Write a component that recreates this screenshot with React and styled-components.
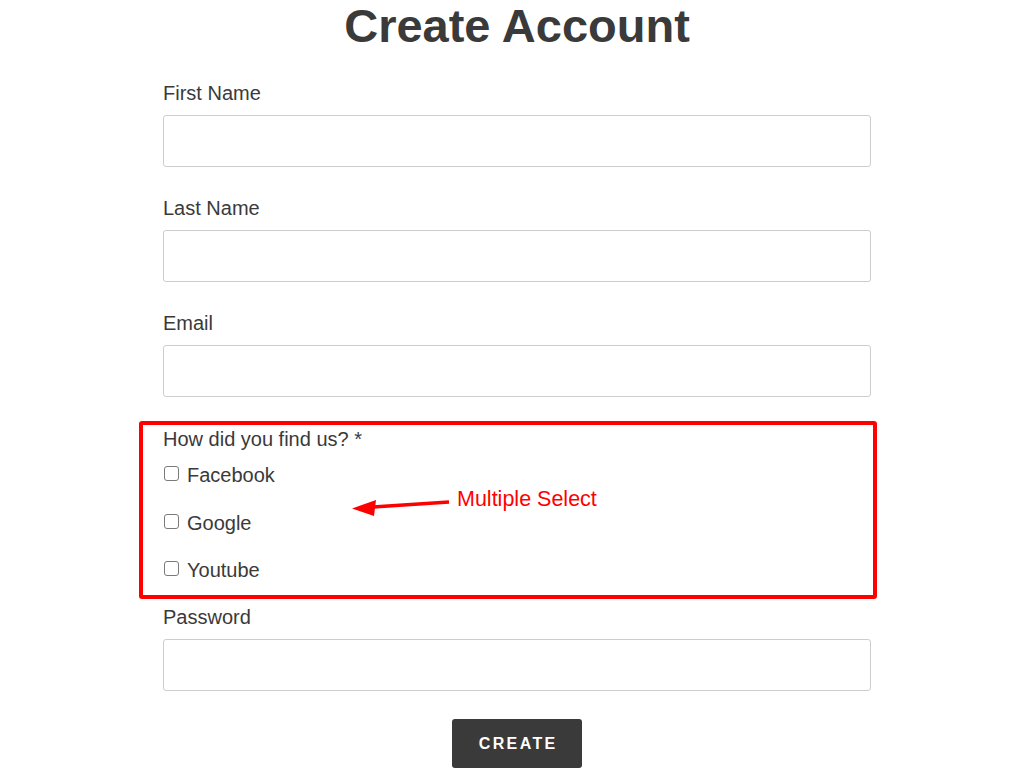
import React from 'react';
import styled, { createGlobalStyle } from 'styled-components';

const GlobalStyle = createGlobalStyle`
  html, body {
    margin: 0;
    padding: 0;
    background: #fff;
  }

  body {
    font-family: "Liberation Sans", Arial, Helvetica, sans-serif;
    color: #3a3a3a;
  }
`;

const Page = styled.div`
  padding-left: 10px;
`;

const Container = styled.form`
  width: 708px;
  margin: 0 auto;
  display: flex;
  flex-direction: column;
`;

const Title = styled.h1`
  margin: 0;
  font-size: 47px;
  line-height: 52px;
  font-weight: 700;
  text-align: center;
  color: #3a3a3a;
`;

const Field = styled.div`
  display: flex;
  flex-direction: column;
  margin-top: ${(p) => p.$top || 30}px;
`;

const Label = styled.label`
  display: block;
  font-size: 20px;
  line-height: 22px;
  color: #3a3a3a;
  margin-bottom: 11px;
`;

const Input = styled.input`
  box-sizing: border-box;
  width: 100%;
  height: 52px;
  border: 1px solid #cdcdcd;
  border-radius: 3px;
  padding: 0 14px;
  font: inherit;
  font-size: 18px;
  outline: none;
  background: #fff;
`;

const Group = styled.fieldset`
  position: relative;
  margin: 30px 0 0;
  padding: 0;
  border: none;
  display: flex;
  flex-direction: column;
`;

const GroupLabel = styled.div`
  font-size: 20px;
  line-height: 24px;
  color: #3a3a3a;
  margin-bottom: 12px;
`;

const Option = styled.label`
  display: flex;
  align-items: flex-start;
  gap: 8px;
  font-size: 20px;
  line-height: 24px;
  color: #3a3a3a;
  & + & {
    margin-top: 23.5px;
  }
`;

const Check = styled.input.attrs({ type: 'checkbox' })`
  appearance: none;
  box-sizing: border-box;
  width: 15px;
  height: 15px;
  margin: 3px 0 0 1px;
  border: 1px solid #7a7a7a;
  border-radius: 3px;
  background: #fff;
`;

const Highlight = styled.div`
  position: absolute;
  top: -6px;
  left: -24px;
  right: -6px;
  bottom: -17px;
  border: 4px solid #ff0000;
  border-radius: 3px;
  pointer-events: none;
`;

const Note = styled.span`
  position: absolute;
  left: 294px;
  top: 60px;
  font-size: 21.5px;
  line-height: 24px;
  color: #ff0000;
  white-space: nowrap;
`;

const Arrow = styled.svg`
  position: absolute;
  left: 177px;
  top: 63px;
`;

const Actions = styled.div`
  display: flex;
  justify-content: center;
  margin-top: 28px;
`;

const Button = styled.button`
  width: 130px;
  height: 49px;
  border: none;
  border-radius: 3px;
  background: #3a3a3a;
  color: #fff;
  font-family: inherit;
  font-size: 16px;
  font-weight: 700;
  letter-spacing: 2.4px;
  padding: 0 0 0 2.4px;
  cursor: pointer;
`;

const sources = ['Facebook', 'Google', 'Youtube'];

const App = () => {
  return (
    <Page>
      <GlobalStyle />
      <Container onSubmit={(e) => e.preventDefault()}>
        <Title>Create Account</Title>
        <Field>
          <Label htmlFor="first">First Name</Label>
          <Input id="first" type="text" />
        </Field>
        <Field>
          <Label htmlFor="last">Last Name</Label>
          <Input id="last" type="text" />
        </Field>
        <Field>
          <Label htmlFor="email">Email</Label>
          <Input id="email" type="email" />
        </Field>
        <Group>
          <GroupLabel>How did you find us? *</GroupLabel>
          {sources.map((s) => (
            <Option key={s}>
              <Check name="source" value={s} />
              {s}
            </Option>
          ))}
          <Highlight />
          <Arrow width="120" height="30" viewBox="0 0 120 30">
            <line x1="33" y1="17" x2="109" y2="12" stroke="#ff0000" strokeWidth="3.5" />
            <polygon points="12,18.5 36,10 34,26" fill="#ff0000" />
          </Arrow>
          <Note>Multiple Select</Note>
        </Group>
        <Field $top={24}>
          <Label htmlFor="password">Password</Label>
          <Input id="password" type="password" />
        </Field>
        <Actions>
          <Button type="submit">CREATE</Button>
        </Actions>
      </Container>
    </Page>
  );
};

export default App;
